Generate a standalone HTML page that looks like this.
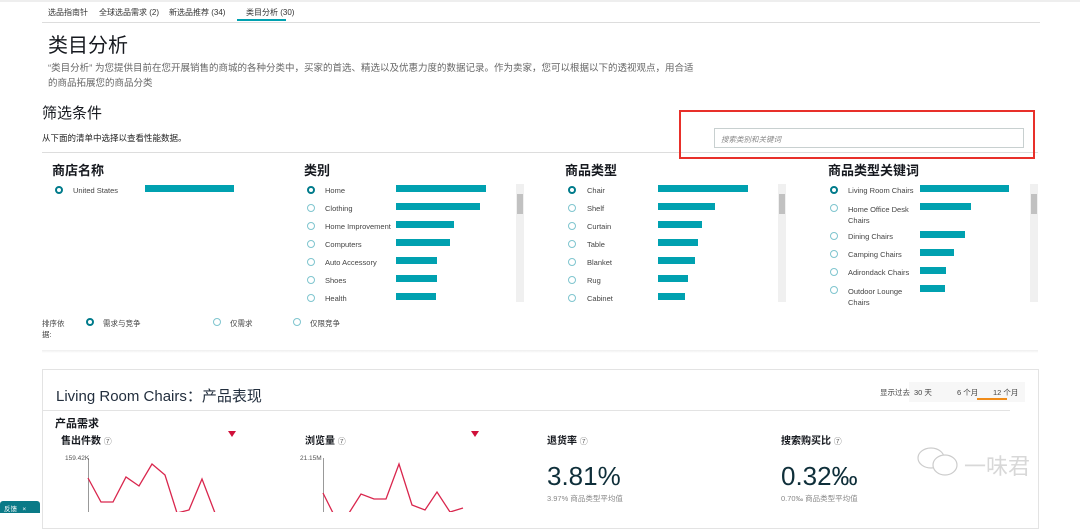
<!DOCTYPE html>
<html><head><meta charset="utf-8"><style>
*{margin:0;padding:0;box-sizing:border-box}
body{width:1080px;height:512px;overflow:hidden;background:#fff;position:relative;font-family:"Liberation Sans","Noto Sans CJK SC",sans-serif;color:#232f3e}
.a{position:absolute;white-space:nowrap}
.t{font-size:8px;color:#333}
.bar{position:absolute;height:7px;background:#00a1b0}
.r{position:absolute;width:8px;height:8px;border:1px solid #7fc5cf;border-radius:50%}
.r.on{border:2.5px solid #007b8b}
.sb{position:absolute;width:8px;background:#f0f0f0}
.sb i{position:absolute;left:1px;top:10px;width:6px;height:20px;background:#c1c1c1}
.h{font-size:13px;font-weight:bold;color:#16191f}
.lab{font-size:7.5px;color:#444}
</style></head><body>
<div class="a" style="left:0;top:0;width:1080px;height:2px;background:#eee"></div>
<div class="a t" style="left:48px;top:7px">选品指南针</div>
<div class="a t" style="left:99px;top:7px">全球选品需求 (2)</div>
<div class="a t" style="left:169px;top:7px">新选品推荐 (34)</div>
<div class="a t" style="left:246px;top:7px">类目分析 (30)</div>
<div class="a" style="left:237px;top:19px;width:49px;height:2px;background:#00a1b0"></div>
<div class="a" style="left:42px;top:22px;width:998px;height:1px;background:#ddd"></div>
<div class="a" style="left:48px;top:29px;font-size:20px;color:#16191f">类目分析</div>
<div class="a" style="left:48px;top:60px;font-size:9.5px;color:#666">“类目分析” 为您提供目前在您开展销售的商城的各种分类中，买家的首选、精选以及优惠力度的数据记录。作为卖家，您可以根据以下的透视观点，用合适</div>
<div class="a" style="left:48px;top:75px;font-size:9.5px;color:#666">的商品拓展您的商品分类</div>
<div class="a" style="left:42px;top:102px;font-size:15px;color:#16191f">筛选条件</div>
<div class="a" style="left:42px;top:132px;font-size:8.5px;color:#222">从下面的清单中选择以查看性能数据。</div>
<div class="a" style="left:42px;top:152px;width:996px;height:1px;background:#ddd"></div>
<div class="a" style="left:679px;top:110px;width:356px;height:49px;border:2px solid #e8302a"></div>
<div class="a" style="left:714px;top:128px;width:310px;height:20px;border:1px solid #c8d0d0;font-size:7.5px;color:#888;font-style:italic;padding:5px 6px">搜索类别和关键词</div>

<div class="a h" style="left:52px;top:160px">商店名称</div>
<div class="a h" style="left:304px;top:160px">类别</div>
<div class="a h" style="left:565px;top:160px">商品类型</div>
<div class="a h" style="left:828px;top:160px">商品类型关键词</div>

<div class="r on" style="left:55px;top:186px"></div><div class="a lab" style="left:73px;top:186px">United States</div><div class="bar" style="left:145px;top:185px;width:89px"></div>

<div class="r on" style="left:307px;top:186px"></div><div class="a lab" style="left:325px;top:186px">Home</div><div class="bar" style="left:396px;top:185px;width:90px"></div>
<div class="r" style="left:307px;top:204px"></div><div class="a lab" style="left:325px;top:204px">Clothing</div><div class="bar" style="left:396px;top:203px;width:84px"></div>
<div class="r" style="left:307px;top:222px"></div><div class="a lab" style="left:325px;top:222px">Home Improvement</div><div class="bar" style="left:396px;top:221px;width:58px"></div>
<div class="r" style="left:307px;top:240px"></div><div class="a lab" style="left:325px;top:240px">Computers</div><div class="bar" style="left:396px;top:239px;width:54px"></div>
<div class="r" style="left:307px;top:258px"></div><div class="a lab" style="left:325px;top:258px">Auto Accessory</div><div class="bar" style="left:396px;top:257px;width:41px"></div>
<div class="r" style="left:307px;top:276px"></div><div class="a lab" style="left:325px;top:276px">Shoes</div><div class="bar" style="left:396px;top:275px;width:41px"></div>
<div class="r" style="left:307px;top:294px"></div><div class="a lab" style="left:325px;top:294px">Health</div><div class="bar" style="left:396px;top:293px;width:40px"></div>
<div class="sb" style="left:516px;top:184px;height:118px"><i></i></div>

<div class="r on" style="left:568px;top:186px"></div><div class="a lab" style="left:587px;top:186px">Chair</div><div class="bar" style="left:658px;top:185px;width:90px"></div>
<div class="r" style="left:568px;top:204px"></div><div class="a lab" style="left:587px;top:204px">Shelf</div><div class="bar" style="left:658px;top:203px;width:57px"></div>
<div class="r" style="left:568px;top:222px"></div><div class="a lab" style="left:587px;top:222px">Curtain</div><div class="bar" style="left:658px;top:221px;width:44px"></div>
<div class="r" style="left:568px;top:240px"></div><div class="a lab" style="left:587px;top:240px">Table</div><div class="bar" style="left:658px;top:239px;width:40px"></div>
<div class="r" style="left:568px;top:258px"></div><div class="a lab" style="left:587px;top:258px">Blanket</div><div class="bar" style="left:658px;top:257px;width:37px"></div>
<div class="r" style="left:568px;top:276px"></div><div class="a lab" style="left:587px;top:276px">Rug</div><div class="bar" style="left:658px;top:275px;width:30px"></div>
<div class="r" style="left:568px;top:294px"></div><div class="a lab" style="left:587px;top:294px">Cabinet</div><div class="bar" style="left:658px;top:293px;width:27px"></div>
<div class="sb" style="left:778px;top:184px;height:118px"><i></i></div>

<div class="r on" style="left:830px;top:186px"></div><div class="a lab" style="left:848px;top:186px">Living Room Chairs</div><div class="bar" style="left:920px;top:185px;width:89px"></div>
<div class="r" style="left:830px;top:204px"></div><div class="a lab" style="left:848px;top:204px;line-height:11px">Home Office Desk<br>Chairs</div><div class="bar" style="left:920px;top:203px;width:51px"></div>
<div class="r" style="left:830px;top:232px"></div><div class="a lab" style="left:848px;top:232px">Dining Chairs</div><div class="bar" style="left:920px;top:231px;width:45px"></div>
<div class="r" style="left:830px;top:250px"></div><div class="a lab" style="left:848px;top:250px">Camping Chairs</div><div class="bar" style="left:920px;top:249px;width:34px"></div>
<div class="r" style="left:830px;top:268px"></div><div class="a lab" style="left:848px;top:268px">Adirondack Chairs</div><div class="bar" style="left:920px;top:267px;width:26px"></div>
<div class="r" style="left:830px;top:286px"></div><div class="a lab" style="left:848px;top:286px;line-height:11px">Outdoor Lounge<br>Chairs</div><div class="bar" style="left:920px;top:285px;width:25px"></div>
<div class="sb" style="left:1030px;top:184px;height:118px"><i></i></div>

<div class="a lab" style="left:42px;top:318px;line-height:11px">排序依<br>据:</div>
<div class="r on" style="left:86px;top:318px"></div><div class="a lab" style="left:103px;top:318px">需求与竞争</div>
<div class="r" style="left:213px;top:318px"></div><div class="a lab" style="left:230px;top:318px">仅需求</div>
<div class="r" style="left:293px;top:318px"></div><div class="a lab" style="left:310px;top:318px">仅限竞争</div>
<div class="a" style="left:42px;top:350px;width:996px;height:3px;background:linear-gradient(#eee,#fff)"></div>

<div class="a" style="left:42px;top:369px;width:997px;height:160px;border:1px solid #e3e3e3"></div>
<div class="a" style="left:56px;top:385px;font-size:15px;color:#232f3e">Living Room Chairs：产品表现</div>
<div class="a" style="left:42px;top:410px;width:968px;height:1px;background:#e3e3e3"></div>
<div class="a" style="left:909px;top:382px;width:116px;height:20px;background:#f7f7f7"></div>
<div class="a lab" style="left:880px;top:387px">显示过去</div>
<div class="a lab" style="left:914px;top:387px">30 天</div>
<div class="a lab" style="left:957px;top:387px">6 个月</div>
<div class="a lab" style="left:993px;top:387px">12 个月</div>
<div class="a" style="left:977px;top:398px;width:30px;height:2px;background:#f08c1a"></div>
<div class="a" style="left:55px;top:415px;font-size:11px;font-weight:bold;color:#16191f">产品需求</div>
<div class="a" style="left:61px;top:432px;font-size:10px;font-weight:bold;color:#16191f">售出件数 <span style="font-weight:normal;font-size:8px;color:#666">⑦</span></div>
<div class="a" style="left:305px;top:432px;font-size:10px;font-weight:bold;color:#16191f">浏览量 <span style="font-weight:normal;font-size:8px;color:#666">⑦</span></div>
<div class="a" style="left:547px;top:432px;font-size:10px;font-weight:bold;color:#16191f">退货率 <span style="font-weight:normal;font-size:8px;color:#666">⑦</span></div>
<div class="a" style="left:781px;top:432px;font-size:10px;font-weight:bold;color:#16191f">搜索购买比 <span style="font-weight:normal;font-size:8px;color:#666">⑦</span></div>
<svg class="a" style="left:0;top:0" width="1080" height="512">
<polygon points="228,431 236,431 232,437" fill="#d0103a"/>
<polygon points="471,431 479,431 475,437" fill="#d0103a"/>
<line x1="88.5" y1="458" x2="88.5" y2="512" stroke="#999"/>
<line x1="323.5" y1="458" x2="323.5" y2="512" stroke="#999"/>
<polyline fill="none" stroke="#d9264d" stroke-width="1.3" points="88,478 101,502 113,502 126,477 139,486 152,464 165,475 177,513 189,510 202,479 215,513"/>
<polyline fill="none" stroke="#d9264d" stroke-width="1.3" points="323,493 333,513 349,513 361,494 374,499 386,499 399,464 412,505 425,510 437,492 450,512 463,508"/>
<g fill="none" stroke="#ccc" stroke-width="1.2"><ellipse cx="931" cy="458" rx="13" ry="10"/><ellipse cx="945" cy="465" rx="12" ry="10" fill="#fff"/></g>
</svg>
<div class="a" style="left:65px;top:455px;font-size:6.5px;color:#555">159.42K</div>
<div class="a" style="left:300px;top:455px;font-size:6.5px;color:#555">21.15M</div>
<div class="a" style="left:547px;top:461px;font-size:26px;color:#0f2f3a">3.81%</div>
<div class="a" style="left:547px;top:493px;font-size:7.5px;color:#888">3.97% 商品类型平均值</div>
<div class="a" style="left:781px;top:461px;font-size:26px;color:#0f2f3a">0.32‰</div>
<div class="a" style="left:781px;top:493px;font-size:7.5px;color:#888">0.70‰ 商品类型平均值</div>
<div class="a" style="left:964px;top:449px;font-size:22px;color:#d8d8d8">一味君</div>
<div class="a" style="left:0;top:501px;width:40px;height:12px;background:#0a7a87;border-radius:3px 3px 0 0;font-size:6.5px;color:#fff;padding:2px 4px">反馈 &nbsp; ×</div>
</body></html>
